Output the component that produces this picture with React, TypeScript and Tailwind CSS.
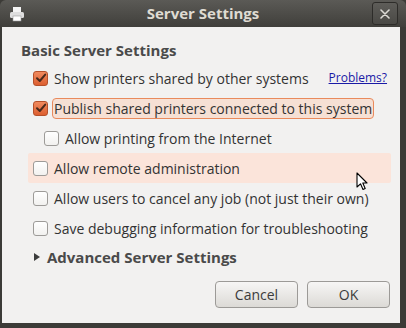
import type { ReactNode } from 'react'

function CheckBox({ checked }: { checked?: boolean }) {
  if (checked) {
    return (
      <span className="flex size-[15px] shrink-0 items-center justify-center rounded-[3px] border border-[#b5502a] bg-gradient-to-b from-[#f08a5e] to-[#dd5f2f]">
        <svg viewBox="0 0 12 12" className="size-[12px]">
          <path d="M2 6.2 L4.8 9 L10.2 2.6" fill="none" stroke="#4a2a1c" strokeWidth="2" strokeLinecap="round" strokeLinejoin="round" />
        </svg>
      </span>
    )
  }
  return <span className="size-[15px] shrink-0 rounded-[3px] border border-[#9d9b98] bg-gradient-to-b from-[#ffffff] to-[#f2f1ef]" />
}

function Row({ checked, children, className = '' }: { checked?: boolean; children: ReactNode; className?: string }) {
  return (
    <div className={`flex h-[30px] items-center gap-[6px] whitespace-nowrap ${className}`}>
      <CheckBox checked={checked} />
      {children}
    </div>
  )
}

function Cursor() {
  return (
    <svg viewBox="0 0 12 19" className="absolute left-[356px] top-[172px] h-[19px] w-[12px]">
      <path d="M1 1 L1 15 L4.5 11.8 L7 17.5 L9.2 16.5 L6.8 11 L11 11 Z" fill="#ffffff" stroke="#000000" strokeWidth="1.1" strokeLinejoin="round" />
    </svg>
  )
}

export default function App() {
  return (
    <div
      className="relative flex h-[328px] w-[406px] flex-col overflow-hidden bg-[#3c3b37] text-[14px] text-[#333333]"
      style={{ fontFamily: '"Open Sans", "Noto Sans", sans-serif' }}
    >
      <div className="relative flex h-[27px] shrink-0 items-center justify-center rounded-t-[6px] bg-gradient-to-b from-[#5b5a56] to-[#403f3b]">
        <svg viewBox="0 0 16 16" className="absolute left-[9px] top-[6px] size-[16px]">
          <rect x="4" y="1" width="8" height="5" fill="#f4f4f4" />
          <rect x="1" y="6" width="14" height="6" rx="1.5" fill="#dedede" />
          <rect x="4" y="10" width="8" height="5" fill="#ffffff" stroke="#9a9a9a" strokeWidth="0.6" />
        </svg>
        <span className="text-[15px] font-bold text-[#dfdbd2]">Server Settings</span>
        <div className="absolute right-[8px] top-[2px] flex h-[23px] w-[26px] items-center justify-center rounded-[3px] border border-[#2d2c29] bg-gradient-to-b from-[#5e5d59] to-[#4a4945]">
          <svg viewBox="0 0 10 10" className="size-[10px]">
            <path d="M1 1 L9 9 M9 1 L1 9" stroke="#dcdad5" strokeWidth="1.6" strokeLinecap="round" />
          </svg>
        </div>
      </div>

      <div className="ml-[2px] mr-[6px] mb-[5px] flex flex-1 flex-col bg-[#f2f1f0] px-[19px] pt-[13px]">
        <div className="text-[15px] font-bold leading-[20px] text-[#4a4a4a]">Basic Server Settings</div>

        <div className="mt-[3px] flex flex-col pl-[12px]">
          <Row checked>
            <span>Show printers shared by other systems</span>
            <span className="ml-[14px] text-[12px] text-[#1a1aa6] underline">Problems?</span>
          </Row>
          <Row checked>
            <span className="-ml-[2px] rounded-[4px] border border-[#e98a5c] bg-[#f6e0d4] px-[1px] leading-[19px]">
              Publish shared printers connected to this system
            </span>
          </Row>
          <Row className="pl-[11px]">
            <span>Allow printing from the Internet</span>
          </Row>
          <Row className="-ml-[5px] -mr-[10px] rounded-[2px] bg-[#fbe4da] pl-[5px]">
            <span>Allow remote administration</span>
          </Row>
          <Row>
            <span>Allow users to cancel any job (not just their own)</span>
          </Row>
          <Row>
            <span>Save debugging information for troubleshooting</span>
          </Row>
          <div className="flex h-[28px] items-center gap-[6px]">
            <svg viewBox="0 0 8 10" className="h-[10px] w-[8px]">
              <path d="M1 1 L7 5 L1 9 Z" fill="#3c3c3c" />
            </svg>
            <span className="text-[15px] font-bold text-[#4a4a4a]">Advanced Server Settings</span>
          </div>
        </div>

        <div className="-mr-[9px] mt-[10px] flex justify-end gap-[9px]">
          <button className="h-[27px] w-[83px] rounded-[4px] border border-[#9c9a97] bg-gradient-to-b from-[#f7f6f5] to-[#dcdad6] text-[14px] text-[#3c3c3c]">
            Cancel
          </button>
          <button className="h-[27px] w-[83px] rounded-[4px] border border-[#9c9a97] bg-gradient-to-b from-[#f7f6f5] to-[#dcdad6] text-[14px] text-[#3c3c3c]">
            OK
          </button>
        </div>
      </div>
      <Cursor />
    </div>
  )
}
